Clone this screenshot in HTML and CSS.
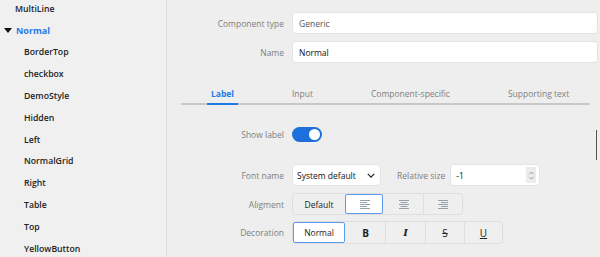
FILE: index.html
```html
<!DOCTYPE html>
<html>
<head>
<meta charset="utf-8">
<link rel="stylesheet" href="styles.css">
</head>
<body>
<div class="app">
  <aside class="sidebar">
    <ul class="tree">
      <li class="item">MultiLine</li>
      <li class="item open"><span class="caret"></span>Normal</li>
      <li class="item child">BorderTop</li>
      <li class="item child">checkbox</li>
      <li class="item child">DemoStyle</li>
      <li class="item child">Hidden</li>
      <li class="item child">Left</li>
      <li class="item child">NormalGrid</li>
      <li class="item child">Right</li>
      <li class="item child">Table</li>
      <li class="item child">Top</li>
      <li class="item child">YellowButton</li>
    </ul>
  </aside>
  <main class="main">
    <div class="top-form">
      <div class="row">
        <label class="lbl">Component type</label>
        <div class="field muted">Generic</div>
      </div>
      <div class="row">
        <label class="lbl">Name</label>
        <div class="field">Normal</div>
      </div>
    </div>
    <nav class="tabs">
      <span class="tab active">Label</span>
      <span class="tab">Input</span>
      <span class="tab">Component-specific</span>
      <span class="tab">Supporting text</span>
    </nav>
    <div class="panel">
      <div class="prow r-show">
        <label class="lbl">Show label</label>
        <span class="toggle"><span class="knob"></span></span>
      </div>
      <div class="prow r-font">
        <label class="lbl">Font name</label>
        <div class="select">System default
          <svg class="chev" viewBox="0 0 10 6" width="8" height="5"><path d="M1 1 L5 5 L9 1" fill="none" stroke="#222" stroke-width="1.5"/></svg>
        </div>
        <label class="lbl2">Relative size</label>
        <div class="number">-1
          <span class="spin"><svg viewBox="0 0 8 12" width="7" height="11"><path d="M1.5 4.5 L4 2 L6.5 4.5 M1.5 7.5 L4 10 L6.5 7.5" fill="none" stroke="#888" stroke-width="1"/></svg></span>
        </div>
      </div>
      <div class="prow r-align">
        <label class="lbl">Aligment</label>
        <div class="seg">
          <span class="sb w52">Default</span>
          <span class="sb w38 sel"><svg viewBox="0 0 12 10" width="12" height="10"><path d="M1 1.5H11M1 3.5H8M1 5.5H11M1 7.5H8M1 9.5H11" stroke="#9aa0a8" stroke-width="1"/></svg></span>
          <span class="sb w40"><svg viewBox="0 0 12 10" width="12" height="10"><path d="M1 1.5H11M2.5 3.5H9.5M1 5.5H11M2.5 7.5H9.5M1 9.5H11" stroke="#9aa0a8" stroke-width="1"/></svg></span>
          <span class="sb w39"><svg viewBox="0 0 12 10" width="12" height="10"><path d="M1 1.5H11M4 3.5H11M1 5.5H11M4 7.5H11M1 9.5H11" stroke="#9aa0a8" stroke-width="1"/></svg></span>
        </div>
      </div>
      <div class="prow r-deco">
        <label class="lbl">Decoration</label>
        <div class="seg">
          <span class="sb w52 sel">Normal</span>
          <span class="sb w40 b">B</span>
          <span class="sb w40 i">I</span>
          <span class="sb w39 s">S</span>
          <span class="sb w38 u">U</span>
        </div>
      </div>
    </div>
    <div class="scrollthumb"></div>
  </main>
</div>
</body>
</html>
```

FILE: styles.css
```css
* { box-sizing: border-box; }
html, body { margin: 0; padding: 0; }
body {
  width: 600px;
  height: 257px;
  overflow: hidden;
  font-family: "Open Sans", "Noto Sans", sans-serif;
  font-size: 9px;
  color: #222;
  background: #eeeeee;
}
.app { display: flex; height: 257px; }

.sidebar {
  width: 167px;
  flex: none;
  background: #f0f0f0;
  border-right: 1px solid #e0e0e0;
  overflow: hidden;
}
.tree { list-style: none; margin: -2px 0 0; padding: 0; }
.item {
  height: 21.8px;
  display: flex;
  align-items: center;
  padding-left: 15px;
  font-weight: 600;
  color: #222;
  font-size: 8.7px;
}
.item.open { padding-left: 4px; color: #1f7ae8; font-weight: 700; font-size: 9px; }
.caret {
  width: 0; height: 0;
  border-left: 4px solid transparent;
  border-right: 4px solid transparent;
  border-top: 5px solid #111;
  margin-right: 4px;
}
.item.child { padding-left: 24px; }

.main { flex: 1; position: relative; font-size: 8.5px; }
.top-form { padding: 12px 0 1px; }
.row {
  display: flex;
  align-items: center;
  height: 22px;
  margin-bottom: 7px;
}
.row:last-child { margin-bottom: 0; }
.lbl {
  width: 117px;
  flex: none;
  text-align: right;
  color: #808080;
}
.field {
  margin-left: 8px;
  width: 306px;
  height: 22px;
  background: #fff;
  border: 1px solid #e4e4e4;
  border-radius: 4px;
  display: flex;
  align-items: center;
  padding-left: 6px;
  color: #111;
}
.field.muted { color: #555; }

.tabs {
  margin: 20px 10px 0 14px;
  height: 21px;
  border-bottom: 2px solid #c8c8c8;
  display: flex;
  gap: 50px;
  padding-left: 26px;
  align-items: stretch;
}
.tab {
  padding: 0 4px;
  color: #808080;
  display: flex;
  align-items: center;
  margin-bottom: -2px;
  border-bottom: 2px solid transparent;
}
.tab.active {
  color: #1f7ae8;
  font-weight: 700;
  border-bottom-color: #1f7ae8;
}

.panel { padding-top: 21px; }
.prow { display: flex; align-items: center; }
.r-show { height: 16px; }
.r-font { height: 22px; margin-top: 22px; }
.r-align { height: 22px; margin-top: 7px; }
.r-deco { height: 23px; margin-top: 6px; }

.toggle {
  margin-left: 8px;
  width: 30px;
  height: 15px;
  border-radius: 8px;
  background: #1d6fdc;
  position: relative;
}
.knob {
  position: absolute;
  right: 2px; top: 2px;
  width: 11px; height: 11px;
  border-radius: 50%;
  background: #fff;
}

.select {
  margin-left: 8px;
  width: 89px;
  height: 22px;
  background: #fff;
  border: 1px solid #e4e4e4;
  border-radius: 4px;
  display: flex;
  align-items: center;
  justify-content: space-between;
  padding: 0 5px 0 4px;
  color: #111;
}
.lbl2 { margin-left: 16px; color: #808080; }
.number {
  margin-left: 5px;
  width: 90px;
  height: 22px;
  background: #fff;
  border: 1px solid #e4e4e4;
  border-radius: 4px;
  display: flex;
  align-items: center;
  justify-content: space-between;
  padding: 0 3px 0 5px;
  color: #111;
}
.spin {
  width: 10px; height: 16px;
  background: #ececec;
  display: flex; align-items: center; justify-content: center;
}

.seg {
  margin-left: 8px;
  display: flex;
  height: 100%;
  background: #efefef;
  border: 1px solid #dedede;
  border-radius: 4px;
}
.sb {
  display: flex;
  align-items: center;
  justify-content: center;
  border-left: 1px solid #dedede;
  height: 100%;
  color: #222;
}
.sb:first-child { border-left: none; }
.sb.sel {
  background: #fff;
  outline: 1px solid #5b9af0;
  outline-offset: -1px;
  border-radius: 2px;
  border-left-color: transparent;
}
.sb.sel + .sb { border-left-color: transparent; }
.w52 { width: 52px; }
.w38 { width: 38px; }
.w39 { width: 39px; }
.w40 { width: 40px; }
.b { font-weight: 700; font-size: 10px; }
.i { font-weight: 700; font-style: italic; font-size: 10px; font-family: "DejaVu Serif", serif; }
.s { text-decoration: line-through; font-size: 10px; }
.u { text-decoration: underline; font-size: 10px; }

.scrollthumb {
  position: absolute;
  right: 3px;
  top: 130px;
  width: 1.5px;
  height: 30px;
  background: #555;
}
```
